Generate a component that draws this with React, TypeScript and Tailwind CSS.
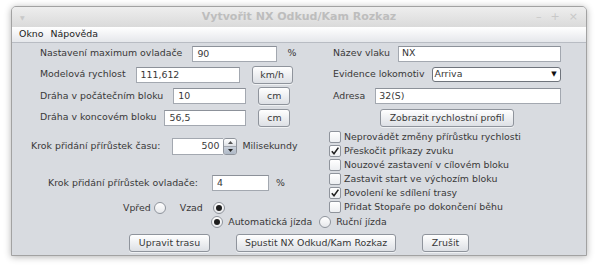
import React from "react"

const font = { fontFamily: '"DejaVu Sans", sans-serif' }

function Field({ value, w, right }: { value: string; w: string; right?: boolean }) {
    return (
        <div className={`${w} h-[16px] bg-white border border-[#a3a8b0] border-t-[#8c9199] flex items-center px-[4px] ${right ? 'justify-end' : ''}`}>
            <span className="leading-none">{value}</span>
        </div>
    )
}

function Btn({ children, w }: { children: React.ReactNode; w: string }) {
    return (
        <div className={`${w} h-[18px] rounded-[3px] border border-[#8f949c] bg-gradient-to-b from-white to-[#dde0e5] shadow-[0_1px_0_rgba(255,255,255,0.6)] flex items-center justify-center`}>
            <span className="leading-none">{children}</span>
        </div>
    )
}

function Check({ label, checked }: { label: string; checked?: boolean }) {
    return (
        <div className="h-[14px] flex items-center gap-[3px]">
            <div className="w-[12px] h-[12px] rounded-[2px] border border-[#8f949c] bg-gradient-to-b from-white to-[#eceef1] flex items-center justify-center">
                {checked && (
                    <svg width="10" height="10" viewBox="0 0 10 10">
                        <path d="M1.8 5.2 L4 7.8 L8.4 1.6" fill="none" stroke="#222" strokeWidth="1.6" />
                    </svg>
                )}
            </div>
            <span className="leading-none">{label}</span>
        </div>
    )
}

function Radio({ checked }: { checked?: boolean }) {
    return (
        <div className="w-[12px] h-[12px] rounded-full border border-[#8f949c] bg-gradient-to-b from-white to-[#e6e8eb] flex items-center justify-center">
            {checked && <div className="w-[6px] h-[6px] rounded-full bg-[#1e1e1e]" />}
        </div>
    )
}

export default function App() {
    return (
        <div className="w-[600px] h-[266px] bg-white overflow-hidden text-[9.4px] text-[#383838]" style={font}>
            <div className="ml-[11px] mt-[6px] w-[576px] h-[250px] border border-[#a2a2a2] rounded-t-[5px] shadow-[0_1px_7px_rgba(0,0,0,0.3)] flex flex-col bg-[#d8dbe0] overflow-hidden">
                {/* title bar */}
                <div className="h-[20px] shrink-0 bg-gradient-to-b from-[#eeeeee] to-[#dadada] flex items-center px-[8px] text-[#bdbdbd]">
                    <span className="w-[40px] text-[6px] text-[#c8c8c8]">▼</span>
                    <span className="flex-1 text-center font-bold text-[11px]">Vytvořit NX Odkud/Kam Rozkaz</span>
                    <div className="w-[40px] flex justify-end gap-[9px] text-[11px] text-[#c8c8c8]">
                        <span>–</span>
                        <span>+</span>
                        <span>×</span>
                    </div>
                </div>
                {/* menu */}
                <div className="h-[16px] shrink-0 bg-gradient-to-b from-white to-[#e5e7eb] border-b border-[#b8bcc3] flex items-center gap-[7px] px-[7px] text-[#222]">
                    <span>Okno</span>
                    <span>Nápověda</span>
                </div>

                <div className="flex">
                    <div className="w-[308px] flex flex-col pl-[28px]">
                        <div className="h-[21px] flex items-center">
                            <span>Nastavení maximum ovladače</span>
                            <div className="ml-[10px]"><Field value="90" w="w-[85px]" /></div>
                            <span className="ml-[10px]">%</span>
                        </div>
                        <div className="h-[21px] flex items-center">
                            <span>Modelová rychlost</span>
                            <div className="ml-[10px]"><Field value="111,612" w="w-[104px]" /></div>
                            <div className="ml-[12px]"><Btn w="w-[41px]">km/h</Btn></div>
                        </div>
                        <div className="h-[22px] flex items-center">
                            <span>Dráha v počátečním bloku</span>
                            <div className="ml-[10px]"><Field value="10" w="w-[73px]" /></div>
                            <div className="ml-[12px]"><Btn w="w-[32px]">cm</Btn></div>
                        </div>
                        <div className="h-[21px] flex items-center">
                            <span>Dráha v koncovém bloku</span>
                            <div className="ml-[8px]"><Field value="56,5" w="w-[82px]" /></div>
                            <div className="ml-[12px]"><Btn w="w-[32px]">cm</Btn></div>
                        </div>
                    </div>
                    <div className="flex-1 flex flex-col pl-[13px] pr-[25px]">
                        <div className="h-[21px] flex items-center gap-[8px]">
                            <span>Název vlaku</span>
                            <div className="flex-1 h-[16px] bg-white border border-[#a3a8b0] border-t-[#8c9199] flex items-center px-[3px]">NX</div>
                        </div>
                        <div className="h-[21px] flex items-center gap-[7px]">
                            <span>Evidence lokomotiv</span>
                            <div className="flex-1 h-[15px] bg-white border border-[#6f747c] rounded-[3px] flex items-center">
                                <span className="flex-1 pl-[2px]">Arriva</span>
                                <span className="w-[12px] text-[7px] text-[#111] text-center">▼</span>
                            </div>
                        </div>
                        <div className="h-[22px] flex items-center gap-[10px]">
                            <span>Adresa</span>
                            <div className="flex-1 h-[16px] bg-white border border-[#a3a8b0] border-t-[#8c9199] flex items-center px-[3px]">32(S)</div>
                        </div>
                        <div className="h-[21px] flex items-center justify-center">
                            <Btn w="w-[134px]">Zobrazit rychlostní profil</Btn>
                        </div>
                    </div>
                </div>

                <div className="flex pt-[2px]">
                    <div className="w-[308px] flex flex-col">
                        <div className="mt-[7px] h-[18px] flex items-center pl-[19px]">
                            <span>Krok přidání přírůstek času:</span>
                            <div className="ml-[12px] flex h-[17px]">
                                <div className="w-[51px] bg-white border border-[#a3a8b0] border-r-0 flex items-center justify-end pr-[4px]">500</div>
                                <div className="w-[14px] flex flex-col border border-[#8f949c] rounded-[3px] overflow-hidden">
                                    <div className="flex-1 bg-gradient-to-b from-white to-[#dde0e5] flex items-center justify-center border-b border-[#a3a8b0]">
                                        <svg width="5" height="3" viewBox="0 0 5 3"><path d="M0 3 L2.5 0 L5 3Z" fill="#555" /></svg>
                                    </div>
                                    <div className="flex-1 bg-gradient-to-b from-[#c9d0da] to-[#aeb8c6] flex items-center justify-center">
                                        <svg width="5" height="3" viewBox="0 0 5 3"><path d="M0 0 L2.5 3 L5 0Z" fill="#222" /></svg>
                                    </div>
                                </div>
                            </div>
                            <span className="ml-[5px]">Milisekundy</span>
                        </div>
                        <div className="mt-[19px] h-[18px] flex items-center pl-[36px]">
                            <span>Krok přidání přírůstek ovladače:</span>
                            <div className="ml-[14px]"><Field value="4" w="w-[57px]" /></div>
                            <span className="ml-[7px]">%</span>
                        </div>
                        <div className="mt-[9px] h-[14px] flex items-center pl-[111px]">
                            <span>Vpřed</span>
                            <div className="ml-[3px]"><Radio /></div>
                            <span className="ml-[14px]">Vzad</span>
                            <div className="ml-[10px]"><Radio checked /></div>
                        </div>
                    </div>
                    <div className="flex-1 flex flex-col pl-[9px]">
                        <Check label="Neprovádět změny přírůstku rychlosti" />
                        <Check label="Přeskočit příkazy zvuku" checked />
                        <Check label="Nouzové zastavení v cílovém bloku" />
                        <Check label="Zastavit start ve výchozím bloku" />
                        <Check label="Povolení ke sdílení trasy" checked />
                        <Check label="Přidat Stopaře po dokončení běhu" />
                    </div>
                </div>

                <div className="h-[14px] flex items-center justify-center gap-[5px]">
                    <Radio checked />
                    <span>Automatická jízda</span>
                    <div className="ml-[2px]"><Radio /></div>
                    <span>Ruční jízda</span>
                </div>

                <div className="mt-[5px] flex justify-center gap-[26px]">
                    <Btn w="w-[81px]">Upravit trasu</Btn>
                    <Btn w="w-[160px]">Spustit NX Odkud/Kam Rozkaz</Btn>
                    <Btn w="w-[47px]">Zrušit</Btn>
                </div>
            </div>
        </div>
    )
}
